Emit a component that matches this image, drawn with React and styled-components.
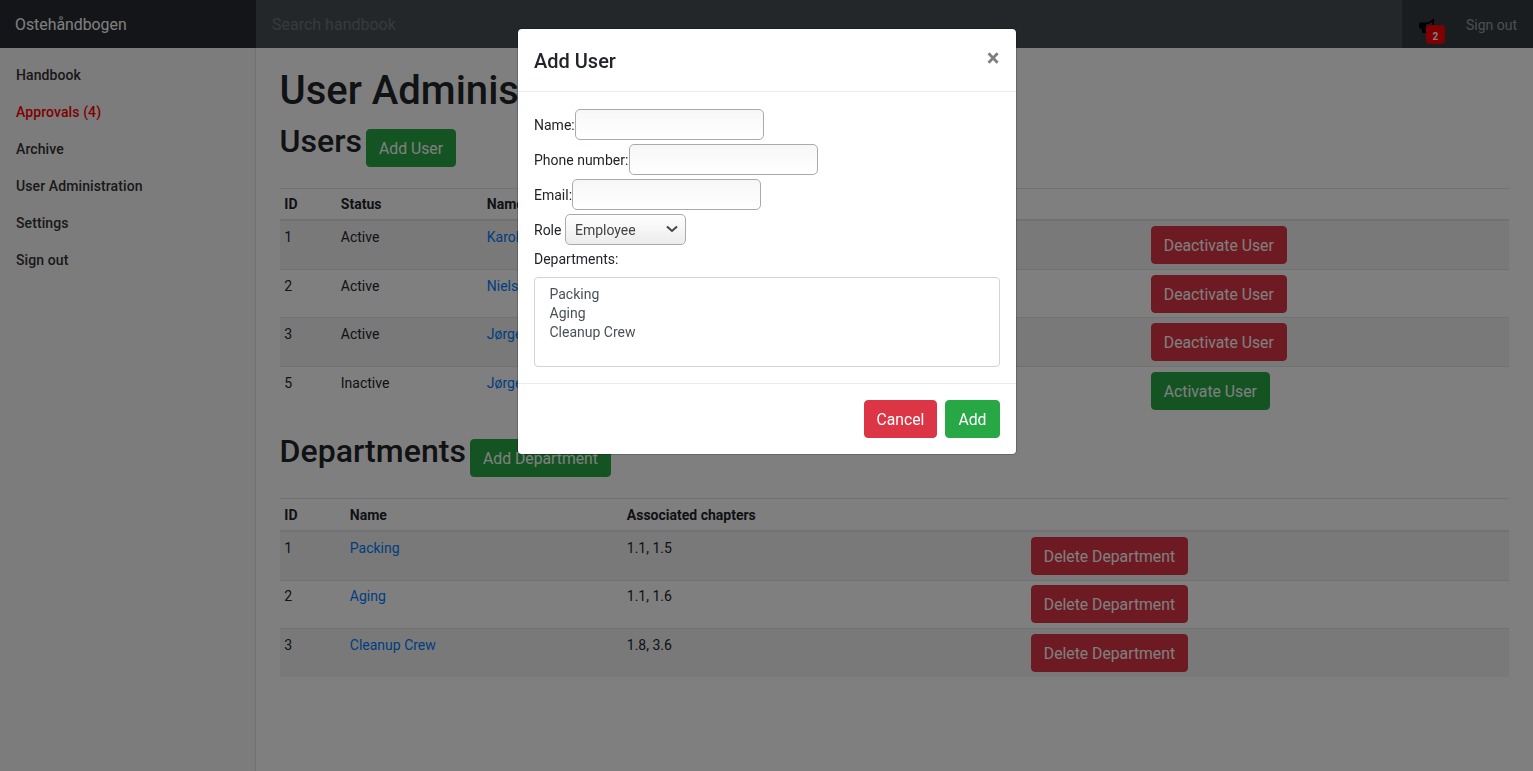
import React from "react";
import styled, { createGlobalStyle } from "styled-components";
import { FaBullhorn } from "react-icons/fa";

const users = [
  { id: 1, status: "Active", name: "Karoline", active: true },
  { id: 2, status: "Active", name: "Niels", active: true },
  { id: 3, status: "Active", name: "Jørgen", active: true },
  { id: 5, status: "Inactive", name: "Jørgen", active: false },
];

const departments = [
  { id: 1, name: "Packing", chapters: "1.1, 1.5" },
  { id: 2, name: "Aging", chapters: "1.1, 1.6" },
  { id: 3, name: "Cleanup Crew", chapters: "1.8, 3.6" },
];

const navItems = ["Handbook", "Approvals (4)", "Archive", "User Administration", "Settings", "Sign out"];

function App() {
  return (
    <>
      <GlobalStyle />
      <Navbar>
        <Brand>Ostehåndbogen</Brand>
        <Search placeholder="Search handbook" />
        <Notifications>
          <FaBullhorn size={16} color="#000" />
          <Badge>2</Badge>
        </Notifications>
        <SignOut href="#">Sign out</SignOut>
      </Navbar>
      <Layout>
        <Sidebar>
          {navItems.map((item) => (
            <NavLink key={item} href="#" $alert={item.startsWith("Approvals")}>
              {item}
            </NavLink>
          ))}
        </Sidebar>
        <Main>
          <Title>User Administration</Title>
          <SectionHead $after="20.7px">
            <SectionTitle>Users</SectionTitle>
            <Button $kind="success">Add User</Button>
          </SectionHead>
          <Table>
            <colgroup>
              <Col $width="56.5px" />
              <Col $width="146px" />
              <Col $width="664px" />
              <Col />
            </colgroup>
            <thead>
              <tr>
                <th>ID</th>
                <th>Status</th>
                <th>Name</th>
                <th></th>
              </tr>
            </thead>
            <tbody>
              {users.map((user) => (
                <tr key={user.id}>
                  <td>{user.id}</td>
                  <td>{user.status}</td>
                  <td>
                    <TextLink href="#">{user.name}</TextLink>
                  </td>
                  <td>
                    {user.active ? (
                      <Button $kind="danger">Deactivate User</Button>
                    ) : (
                      <Button $kind="success">Activate User</Button>
                    )}
                  </td>
                </tr>
              ))}
            </tbody>
          </Table>
          <SectionHead $after="21.6px">
            <SectionTitle>Departments</SectionTitle>
            <Button $kind="success">Add Department</Button>
          </SectionHead>
          <Table>
            <colgroup>
              <Col $width="65.5px" />
              <Col $width="277px" />
              <Col $width="404px" />
              <Col />
            </colgroup>
            <thead>
              <tr>
                <th>ID</th>
                <th>Name</th>
                <th>Associated chapters</th>
                <th></th>
              </tr>
            </thead>
            <tbody>
              {departments.map((dep) => (
                <tr key={dep.id}>
                  <td>{dep.id}</td>
                  <td>
                    <TextLink href="#">{dep.name}</TextLink>
                  </td>
                  <td>{dep.chapters}</td>
                  <td>
                    <Button $kind="danger">Delete Department</Button>
                  </td>
                </tr>
              ))}
            </tbody>
          </Table>
        </Main>
      </Layout>
      <Backdrop />
      <ModalWrap>
        <Modal>
          <ModalHeader>
            <ModalTitle>Add User</ModalTitle>
            <CloseButton>×</CloseButton>
          </ModalHeader>
          <ModalBody>
            <Field>
              <label>Name:</label>
              <TextInput />
            </Field>
            <Field>
              <label>Phone number:</label>
              <TextInput />
            </Field>
            <Field $gap="0">
              <label>Email:</label>
              <TextInput />
            </Field>
            <Field $gap="3.5px">
              <label>Role</label>
              <RoleSelect defaultValue="Employee">
                <option>Employee</option>
                <option>Manager</option>
              </RoleSelect>
            </Field>
            <DepartmentsLabel>Departments:</DepartmentsLabel>
            <DepartmentList multiple defaultValue={[]}>
              {departments.map((dep) => (
                <option key={dep.id}>{dep.name}</option>
              ))}
            </DepartmentList>
          </ModalBody>
          <ModalFooter>
            <Button $kind="danger">Cancel</Button>
            <Button $kind="success">Add</Button>
          </ModalFooter>
        </Modal>
      </ModalWrap>
    </>
  );
}

export default App;

const GlobalStyle = createGlobalStyle`
  * {
    box-sizing: border-box;
  }
  body {
    margin: 0;
    font-family: Roboto, "Liberation Sans", sans-serif;
    font-size: 14px;
    line-height: 1.5;
    color: #212529;
    background: #fff;
  }
`;

const Navbar = styled.header`
  display: flex;
  align-items: stretch;
  height: 48px;
  background: #343a40;
`;

const Brand = styled.div`
  flex: 0 0 16.6667%;
  padding: 13px 15px 11px;
  font-size: 15.85px;
  line-height: 24px;
  color: #fff;
  background: rgba(0, 0, 0, 0.25);
`;

const Search = styled.input`
  flex: 1;
  min-width: 0;
  padding: 8px 16.5px 6px;
  border: 0;
  outline: 0;
  font: inherit;
  font-size: 16px;
  color: #fff;
  background: rgba(255, 255, 255, 0.1);
  &::placeholder {
    color: #6c757d;
  }
`;

const Notifications = styled.div`
  position: relative;
  flex: 0 0 48px;
  display: flex;
  justify-content: flex-start;
  align-items: flex-start;
  padding: 18px 0 0 17px;
`;

const Badge = styled.span`
  position: absolute;
  left: 24px;
  top: 25px;
  width: 19px;
  height: 19px;
  border-radius: 4px;
  font-size: 10px;
  font-weight: 700;
  line-height: 24px;
  text-align: center;
  color: #fff;
  background: red;
`;

const SignOut = styled.a`
  padding: 13px 16px 11px;
  font-size: 14px;
  line-height: 24px;
  color: rgba(255, 255, 255, 0.5);
  text-decoration: none;
`;

const Layout = styled.div`
  display: flex;
  min-height: calc(100vh - 48px);
`;

const Sidebar = styled.nav`
  flex: 0 0 16.6667%;
  display: flex;
  flex-direction: column;
  padding-top: 8.5px;
  background: #f8f9fa;
  border-right: 1px solid #dee2e6;
`;

const NavLink = styled.a`
  padding: 8px 16px;
  font-weight: 500;
  letter-spacing: 0.1px;
  color: ${(p) => (p.$alert ? "red" : "#333")};
  text-decoration: none;
`;

const Main = styled.main`
  flex: 1;
  min-width: 0;
  padding: 19px 24px 0;
`;

const Title = styled.h1`
  margin: 0 0 7px;
  font-size: 40px;
  font-weight: 500;
  line-height: 48px;
`;

const SectionHead = styled.div`
  display: flex;
  align-items: flex-start;
  gap: 4px;
  margin-bottom: ${(p) => p.$after};
  button {
    margin-top: 7px;
  }
`;

const SectionTitle = styled.h2`
  margin: 0;
  font-size: 32px;
  font-weight: 500;
  line-height: 38px;
  letter-spacing: 0.05px;
`;

const buttonColors = {
  success: "#28a745",
  danger: "#dc3545",
};

const Button = styled.button`
  display: inline-block;
  height: 38px;
  padding: 7px 12px 5px;
  border: 1px solid ${(p) => buttonColors[p.$kind]};
  border-radius: 4px;
  font: inherit;
  font-size: 15.75px;
  line-height: 24px;
  vertical-align: middle;
  color: #fff;
  background: ${(p) => buttonColors[p.$kind]};
`;

const Table = styled.table`
  width: 100%;
  margin-bottom: 17.1px;
  border-collapse: collapse;
  table-layout: fixed;
  th,
  td {
    padding: 5.8px 4.8px 3.8px;
    text-align: left;
    vertical-align: top;
    border-top: 1px solid #dee2e6;
  }
  td:last-child {
    padding: 4.8px;
  }
  thead th {
    vertical-align: bottom;
    border-bottom: 2px solid #dee2e6;
  }
  tbody tr:nth-child(odd) {
    background: rgba(0, 0, 0, 0.05);
  }
`;

const Col = styled.col`
  width: ${(p) => p.$width || "auto"};
`;

const TextLink = styled.a`
  color: #007bff;
  text-decoration: none;
`;

const Backdrop = styled.div`
  position: fixed;
  inset: 0;
  background: rgba(0, 0, 0, 0.5);
`;

const ModalWrap = styled.div`
  position: fixed;
  inset: 0;
  display: flex;
  justify-content: center;
  align-items: flex-start;
  padding-top: 28px;
`;

const Modal = styled.div`
  width: 500px;
  background: #fff;
  background-clip: padding-box;
  border: 1px solid rgba(0, 0, 0, 0.2);
  border-radius: 4.8px;
`;

const ModalHeader = styled.div`
  display: flex;
  justify-content: space-between;
  align-items: flex-start;
  padding: 17px 16px 15px 16.5px;
  border-bottom: 1px solid #e9ecef;
`;

const ModalTitle = styled.h5`
  margin: 0;
  font-size: 20px;
  font-weight: 500;
  line-height: 30px;
`;

const CloseButton = styled.button`
  margin: -17px -16px -15px auto;
  padding: 17px 16px 15px;
  border: 0;
  font-family: inherit;
  font-size: 24px;
  font-weight: 700;
  line-height: 1;
  color: #000;
  text-shadow: 0 1px 0 #fff;
  opacity: 0.5;
  background: transparent;
`;

const ModalBody = styled.div`
  display: flex;
  flex-direction: column;
  padding: 17px 16px 16px 16.5px;
`;

const Field = styled.div`
  display: flex;
  align-items: center;
  gap: ${(p) => p.$gap || "0.5px"};
  margin-bottom: 4px;
  label {
    padding-top: 2px;
  }
`;

const TextInput = styled.input`
  width: 189px;
  height: 31px;
  padding: 1px 8px;
  border: 1px solid #aaa;
  border-radius: 5px;
  outline: 0;
  font: inherit;
  background: linear-gradient(#f7f7f7, #fff);
`;

const RoleSelect = styled.select`
  width: 121px;
  height: 31px;
  padding: 2px 9px 0;
  border: 1px solid #aaa;
  border-radius: 5px;
  font: inherit;
  color: #444;
  appearance: none;
  background: url("data:image/svg+xml,%3Csvg xmlns='http://www.w3.org/2000/svg' width='12' height='8' viewBox='0 0 12 8'%3E%3Cpath d='M1 1.5l5 4.5 5-4.5' fill='none' stroke='%23444' stroke-width='2'/%3E%3C/svg%3E")
      no-repeat right 7px top 10px,
    linear-gradient(#fff, #ececec);
`;

const DepartmentsLabel = styled.label`
  margin: 0 0 7px;
`;

const DepartmentList = styled.select`
  width: calc(100% + 0.5px);
  margin-left: -0.5px;
  height: 90px;
  padding: 8px 12px 4px;
  border: 1px solid #ced4da;
  border-radius: 4px;
  outline: 0;
  font: inherit;
  color: #495057;
  background: #fff;
  overflow: hidden;
  option {
    min-height: 0;
    height: 19px;
    padding: 0 3px;
    line-height: 19px;
  }
`;

const ModalFooter = styled.div`
  display: flex;
  justify-content: flex-end;
  gap: 8px;
  padding: 16px;
  border-top: 1px solid #e9ecef;
`;
